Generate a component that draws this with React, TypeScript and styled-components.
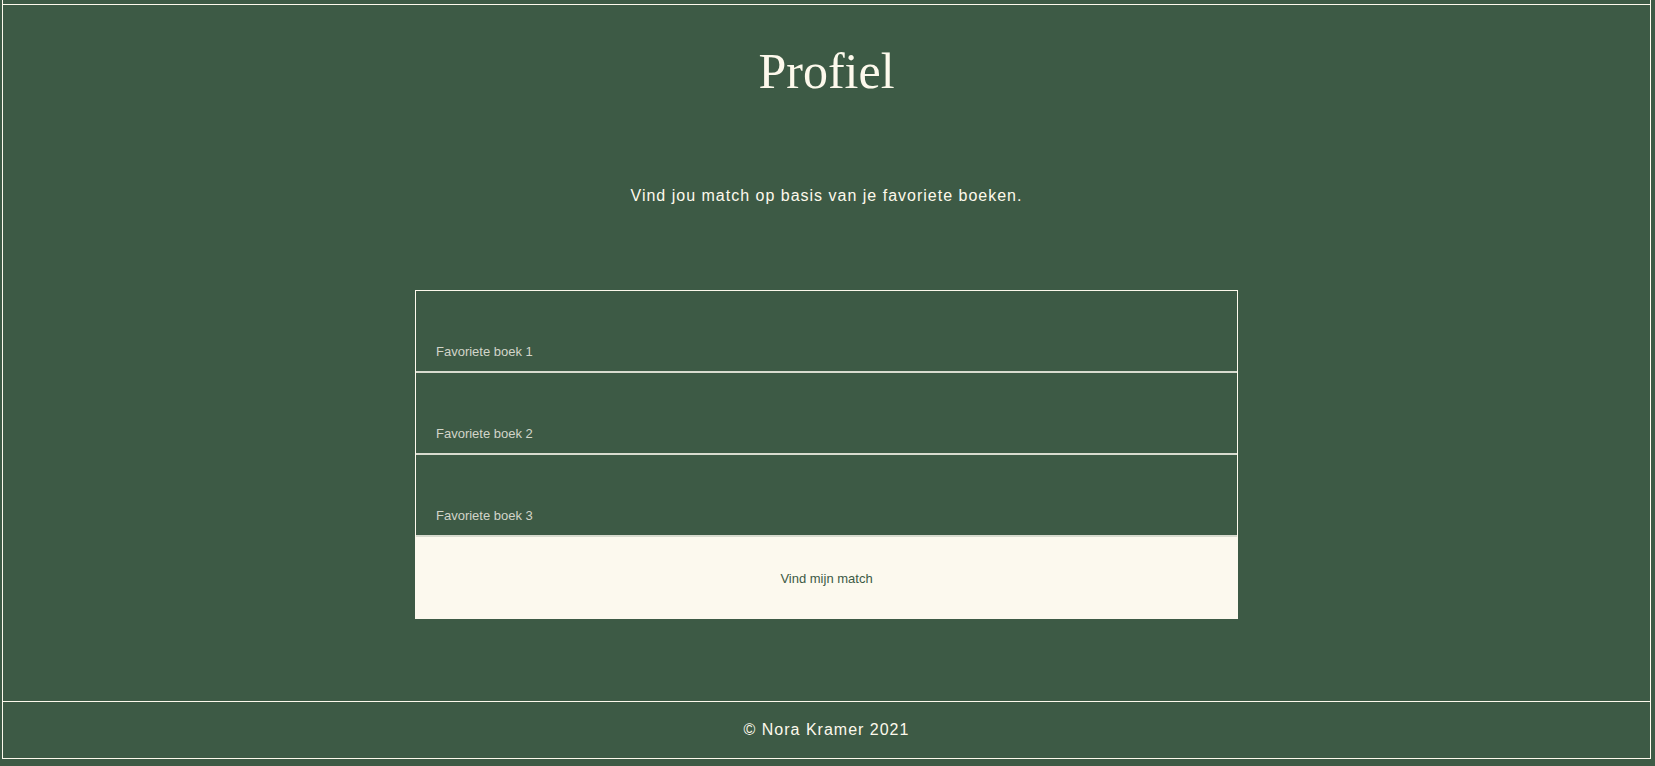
import React from "react";
import styled, { createGlobalStyle } from "styled-components";

const GREEN = "#3d5a45";
const CREAM = "#fdf9ec";

const GlobalStyle = createGlobalStyle`
  html, body {
    margin: 0;
    padding: 0;
    background: ${GREEN};
  }
  body {
    font-family: "Liberation Sans", Arial, sans-serif;
    color: ${CREAM};
  }
  * { box-sizing: border-box; }
`;

const Frame = styled.div`
  margin: 0 4px 0 2px;
  border-left: 1px solid ${CREAM};
  border-right: 1px solid ${CREAM};
  border-bottom: 1px solid ${CREAM};
  display: flex;
  flex-direction: column;
`;

const TopStrip = styled.div`
  height: 5px;
  border-bottom: 1px solid ${CREAM};
`;

const Main = styled.main`
  height: 697px;
  padding-top: 41px;
  border-bottom: 1px solid ${CREAM};
  display: flex;
  flex-direction: column;
  align-items: center;
`;

const Title = styled.h1`
  margin: 0;
  font-family: "Liberation Serif", "Times New Roman", serif;
  font-weight: 400;
  font-size: 50px;
  line-height: 1;
  color: ${CREAM};
`;

const Intro = styled.p`
  margin: 92px 0 0;
  font-size: 16px;
  line-height: 1;
  letter-spacing: 1px;
  color: ${CREAM};
`;

const Form = styled.form`
  margin-top: 86px;
  width: 823px;
  border: 1px solid ${CREAM};
  border-bottom: none;
  display: flex;
  flex-direction: column;
`;

const Field = styled.label`
  height: 82px;
  padding: 0 20px 13px;
  border-bottom: 2px solid #d8dbcf;
  display: flex;
  align-items: flex-end;
  cursor: text;
`;

const Placeholder = styled.span`
  font-size: 13px;
  line-height: 1;
  color: #d2d5c9;
`;

const SubmitButton = styled.button`
  height: 82px;
  border: none;
  margin: 0 -1px;
  background: #fcf9ee;
  color: ${GREEN};
  font-family: "Liberation Sans", Arial, sans-serif;
  font-size: 13px;
  cursor: pointer;
`;

const Footer = styled.footer`
  height: 56px;
  display: flex;
  align-items: center;
  justify-content: center;
  font-size: 16px;
  letter-spacing: 1px;
  color: ${CREAM};
`;

export default function App() {
  const books = ["Favoriete boek 1", "Favoriete boek 2", "Favoriete boek 3"];
  return (
    <>
      <GlobalStyle />
      <Frame>
        <TopStrip />
        <Main>
          <Title>Profiel</Title>
          <Intro>Vind jou match op basis van je favoriete boeken.</Intro>
          <Form onSubmit={(e) => e.preventDefault()}>
            {books.map((b) => (
              <Field key={b}>
                <Placeholder>{b}</Placeholder>
              </Field>
            ))}
            <SubmitButton type="submit">Vind mijn match</SubmitButton>
          </Form>
        </Main>
        <Footer>© Nora Kramer 2021</Footer>
      </Frame>
    </>
  );
}
